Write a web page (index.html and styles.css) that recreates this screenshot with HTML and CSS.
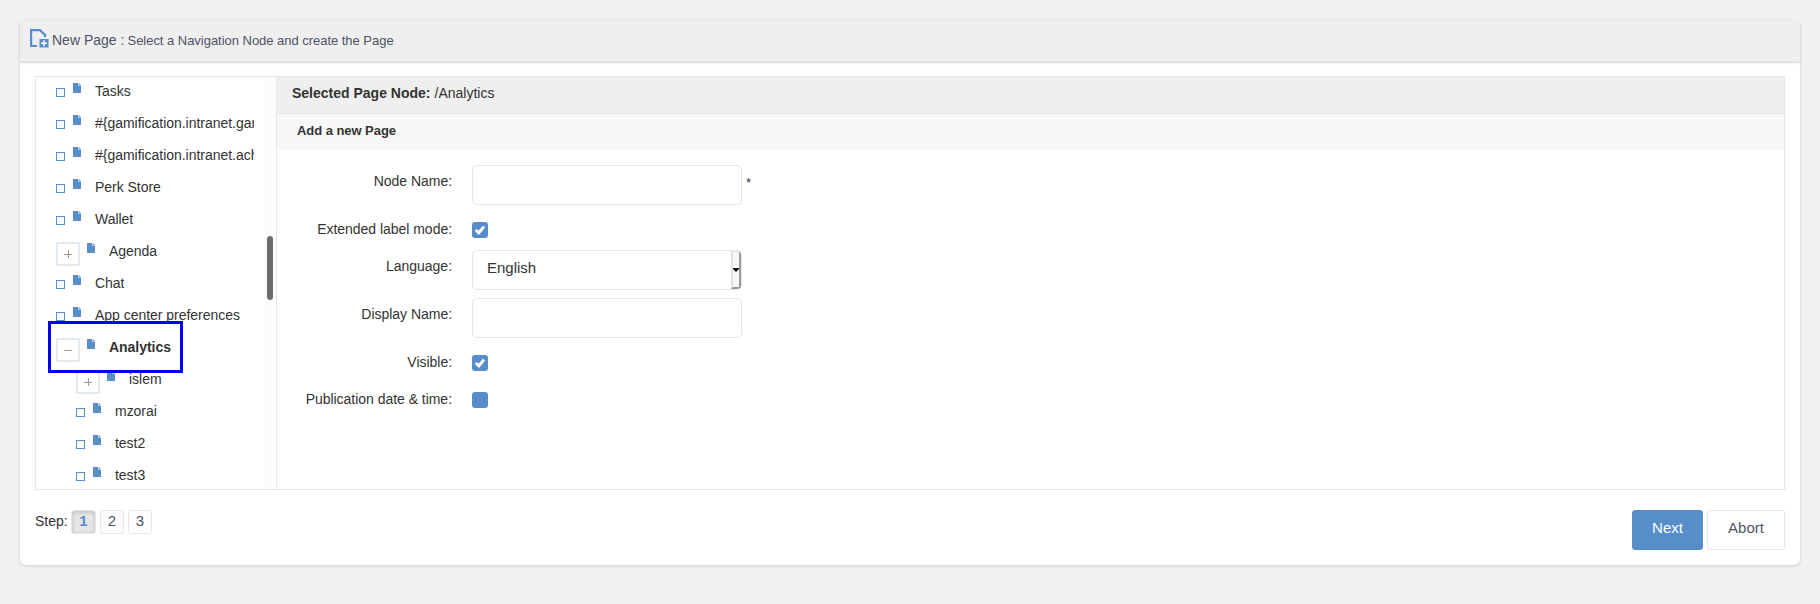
FILE: index.html
```html
<!DOCTYPE html>
<html lang="en">
<head>
<meta charset="utf-8">
<title>New Page</title>
<link rel="stylesheet" href="styles.css">
</head>
<body>
<svg class="defs" width="0" height="0">
  <symbol id="file" viewBox="0 0 8 10"><path fill="#578dc9" d="M0 0h5.200v2.800H8V10H0z"/><path fill="#578dc9" d="M5.800 0L8 2.200H5.800z"/></symbol>
  <symbol id="check" viewBox="0 0 16 16"><path fill="none" stroke="#fff" stroke-width="3" d="M3.700 8L6.800 10.800L12 4.600"/></symbol>
</svg>
<main class="card">
  <header class="card-header">
    <svg class="page-icon" width="19" height="19" viewBox="0 0 19 19"><path fill="none" stroke="#578dc9" stroke-width="2.200" d="M7 17H1.100V1.100H10L15 6V8"/><path fill="#578dc9" d="M9.500 10h9v8.500h-9z"/><path stroke="#fff" stroke-width="1.500" d="M11 14.200h6M14 11.200v6"/></svg>
    <h1 class="title">New Page :</h1><span class="subtitle">Select a Navigation Node and create the Page</span>
  </header>
  <div class="workspace">
    <nav class="sidebar">
      <ul class="tree">
        <li class="node"><i class="leaf"></i><svg class="file"><use href="#file"/></svg><span class="name">Tasks</span></li>
        <li class="node"><i class="leaf"></i><svg class="file"><use href="#file"/></svg><span class="name">#{gamification.intranet.gam</span></li>
        <li class="node"><i class="leaf"></i><svg class="file"><use href="#file"/></svg><span class="name">#{gamification.intranet.ach</span></li>
        <li class="node"><i class="leaf"></i><svg class="file"><use href="#file"/></svg><span class="name">Perk Store</span></li>
        <li class="node"><i class="leaf"></i><svg class="file"><use href="#file"/></svg><span class="name">Wallet</span></li>
        <li class="node"><i class="toggle plus"></i><svg class="file"><use href="#file"/></svg><span class="name">Agenda</span></li>
        <li class="node"><i class="leaf"></i><svg class="file"><use href="#file"/></svg><span class="name">Chat</span></li>
        <li class="node"><i class="leaf"></i><svg class="file"><use href="#file"/></svg><span class="name">App center preferences</span></li>
        <li class="node selected"><i class="toggle"></i><svg class="file"><use href="#file"/></svg><span class="name">Analytics</span><span class="highlight"></span></li>
        <li class="node child"><i class="toggle plus"></i><svg class="file"><use href="#file"/></svg><span class="name">islem</span></li>
        <li class="node child"><i class="leaf"></i><svg class="file"><use href="#file"/></svg><span class="name">mzorai</span></li>
        <li class="node child"><i class="leaf"></i><svg class="file"><use href="#file"/></svg><span class="name">test2</span></li>
        <li class="node child"><i class="leaf"></i><svg class="file"><use href="#file"/></svg><span class="name">test3</span></li>
      </ul>
      <div class="scrollbar"><div class="thumb"></div></div>
    </nav>
    <section class="content">
      <div class="path"><strong class="path-label">Selected Page Node:</strong><span class="path-value">/Analytics</span></div>
      <h2 class="section-title">Add a new Page</h2>
      <form class="form">
        <div class="row"><label class="label">Node Name:</label><div class="input"></div><span class="required">*</span></div>
        <div class="row short"><label class="label">Extended label mode:</label><svg class="checkbox"><use href="#check"/></svg></div>
        <div class="row"><label class="label">Language:</label><div class="input select"><span class="value">English</span><span class="arrow"><svg width="6" height="4" viewBox="0 0 6 4"><path d="M0 0h6v1L3 4L0 1z"/></svg></span></div></div>
        <div class="row"><label class="label">Display Name:</label><div class="input"></div></div>
        <div class="row short"><label class="label">Visible:</label><svg class="checkbox"><use href="#check"/></svg></div>
        <div class="row short"><label class="label">Publication date &amp; time:</label><svg class="checkbox"></svg></div>
      </form>
    </section>
  </div>
  <footer class="footer">
    <div class="steps"><span class="step-label">Step:</span><span class="step current">1</span><span class="step">2</span><span class="step">3</span></div>
    <div class="actions"><button class="btn primary">Next</button><button class="btn">Abort</button></div>
  </footer>
</main>
</body>
</html>
```
FILE: styles.css
```css
* { box-sizing: border-box; }
body {
  margin: 0;
  padding: 20px;
  height: 604px;
  overflow: hidden;
  background: #f1f1f1;
  color: #333;
  font: 14px/20px "Liberation Sans", Arial, sans-serif;
}
.defs { position: absolute; }
.card {
  height: 545px;
  background: #fff;
  border-radius: 6px;
  box-shadow: 0 1px 3px rgba(0, 0, 0, 0.14);
}
.card-header {
  display: flex;
  height: 42px;
  padding: 10px 10px 0;
  background: #efefef;
  border-bottom: 1px solid #dde4eb;
  border-radius: 4px 4px 0 0;
  box-shadow: 0 1px 2px rgba(0, 0, 0, 0.15);
  color: #4d5466;
}
.page-icon { margin: -1px 3px 0 0; }
.title { width: 75.5px; margin: 0; font-size: 14px; font-weight: 400; white-space: nowrap; }
.subtitle { font-size: 13px; line-height: 21px; letter-spacing: -0.03px; white-space: nowrap; }
.workspace {
  display: flex;
  height: 414px;
  margin: 14px 15px 0;
  border: 1px solid #e1e8ee;
}
.sidebar {
  display: flex;
  width: 241px;
  border-right: 1px solid #e1e8ee;
  overflow: hidden;
}
.tree {
  width: 228px;
  margin: -1px 0 0;
  padding: 0 10px 0 20px;
  list-style: none;
}
.node { position: relative; display: flex; height: 32px; align-items: flex-start; }
.child { padding-left: 20px; }
.leaf {
  flex: none;
  width: 9px;
  height: 9px;
  margin-top: 12px;
  border: 1px solid #578dc9;
}
.toggle {
  display: grid;
  flex: none;
  place-items: center;
  width: 24px;
  height: 24px;
  margin: 6px -1px 0 0;
  border: 2px solid #e1e8ee;
  border-radius: 2px;
}
.toggle::before, .toggle.plus::after { content: ""; grid-area: 1 / 1; width: 8px; height: 1px; background: #999; }
.toggle.plus::after { width: 1px; height: 8px; }
.file { flex: none; width: 8px; height: 10px; margin: 7px 14px 0 8px; }
.name { overflow: hidden; line-height: 30px; letter-spacing: -0.03px; white-space: nowrap; }
.selected { z-index: 1; font-weight: 700; }
.highlight {
  position: absolute;
  left: -8px;
  top: -11px;
  width: 135px;
  height: 52px;
  border: 3px solid #00f;
}
.scrollbar { width: 12px; padding: 159px 3px 0; background: #fcfcfc; }
.thumb { width: 6px; height: 64px; border-radius: 3px; background: #6d6d6d; }
.content { flex: 1; }
.path {
  display: flex;
  height: 37px;
  padding: 6px 15px;
  background: #efefef;
  border-bottom: 1px solid #e1e8ee;
}
.path-label { width: 142.5px; white-space: nowrap; }
.section-title {
  height: 36px;
  margin: 0;
  padding: 7px 20px;
  background: #f8f8f8;
  font-size: 13px;
  letter-spacing: -0.05px;
}
.form { padding-top: 15px; }
.row { display: flex; height: 48px; }
.short { height: 37px; }
.label { width: 175px; margin-right: 20px; padding-top: 6px; letter-spacing: -0.03px; text-align: right; white-space: nowrap; }
.input { width: 270px; height: 40px; border: 1px solid #e1e8ee; border-radius: 5px; }
.required { padding: 8px 0 0 4px; font-size: 13px; }
.select { display: flex; justify-content: space-between; padding-left: 14px; overflow: hidden; }
.value { padding-top: 7px; font-size: 15px; }
.arrow {
  display: grid;
  place-items: center end;
  width: 10px;
  background: #f7f7f7;
  border: 2px solid #999;
  border-top: 1px solid #e0e0e0;
  border-left-color: #e0e0e0;
}
.checkbox { width: 16px; height: 16px; margin-top: 9px; border-radius: 3px; background: #578dc9; }
.footer { display: flex; justify-content: space-between; padding: 20px 15px 0; }
.steps { display: flex; }
.step-label { width: 36px; padding-top: 1px; }
.step {
  width: 24px;
  height: 24px;
  margin-right: 4px;
  border: 1px solid #e1e8ee;
  border-radius: 3px;
  color: #4d5466;
  font-size: 15px;
  line-height: 19px;
  text-align: center;
}
.current { width: 25px; background: #e6e6e6; color: #578dc9; font-weight: 700; box-shadow: inset 0 1px 4px rgba(0, 0, 0, 0.2); }
.actions { display: flex; gap: 4px; }
.btn {
  width: 78px;
  height: 40px;
  padding: 0 0 5px;
  background: #fff;
  border: 1px solid #e1e8ee;
  border-radius: 3px;
  color: #4d5466;
  font: 15px "Liberation Sans", Arial, sans-serif;
}
.primary { width: 71px; background: #578dc9; border-color: #578dc9; color: #fff; }
```
